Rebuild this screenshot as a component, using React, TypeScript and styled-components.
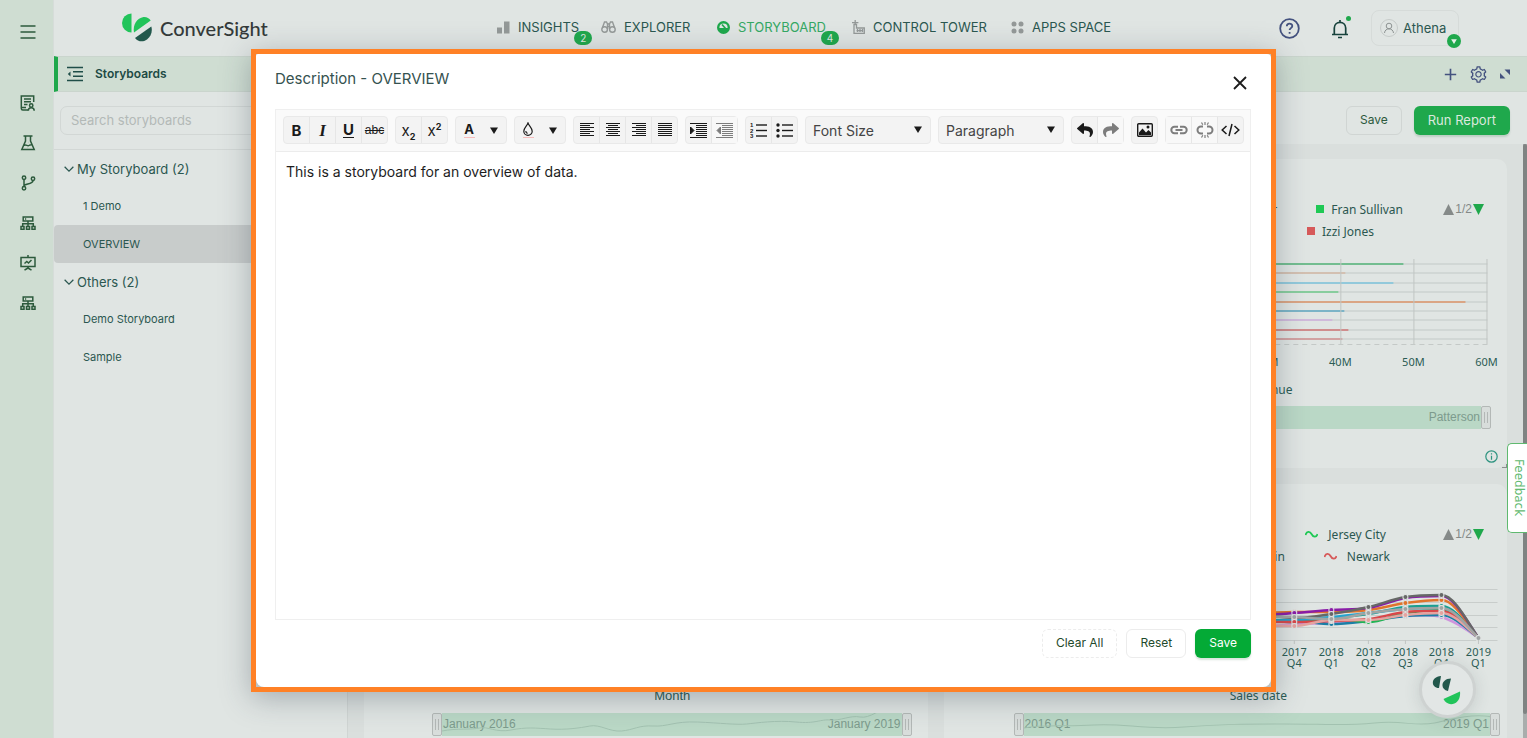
import React from 'react';
import styled, { createGlobalStyle } from 'styled-components';
import { AiOutlineSetting } from 'react-icons/ai';
import { FaReply, FaShare } from 'react-icons/fa';

const c = {
  surface: '#e0e5e3',
  canvas: '#dadfdd',
  rail: '#cfddd2',
  line: '#d2d7d5',
  ink: '#2b5750',
  railInk: '#2c5a3c',
  green: '#1fa84c',
  indigo: '#44527f',
  muted: '#949998',
};

const Global = createGlobalStyle`
  *, *::before, *::after { box-sizing: border-box; }
  html, body { margin: 0; height: 100%; }
  body {
    overflow: hidden;
    font-family: Inter, "Liberation Sans", sans-serif;
    font-size: 13px;
    color: ${c.ink};
    background: ${c.surface};
  }
  button, input, select, textarea { font: inherit; color: inherit; }
  svg { display: block; }
`;

/* ---------- shell ---------- */

const Shell = styled.div`
  display: flex;
  height: 100vh;
`;

const Rail = styled.nav`
  flex: none;
  width: 54px;
  padding: 24px 0 0 2px;
  display: flex;
  flex-direction: column;
  align-items: center;
  gap: 24px;
  background: ${c.rail};
  color: ${c.railInk};
  border-right: 1px solid #d6dcd9;
`;

const IconButton = styled.button`
  display: flex;
  align-items: center;
  justify-content: center;
  padding: 0;
  border: 0;
  background: none;
  cursor: pointer;
`;

const MenuButton = styled(IconButton)`
  height: 16px;
  margin-bottom: 31px;
`;

const Body = styled.div`
  flex: 1;
  min-width: 0;
  display: flex;
  flex-direction: column;
`;

const Header = styled.header`
  flex: none;
  height: 56px;
  display: flex;
  align-items: center;
  padding: 0 68px;
`;

const Brand = styled.a`
  flex: 0 0 375px;
  display: flex;
  align-items: center;
  gap: 8px;
  color: #343a3a;
  text-decoration: none;
  font: 500 20px/30px Lato, sans-serif;
`;

const TopNav = styled.nav`
  display: grid;
  grid-template-columns: 104px 116px 135px 159px auto;
  padding-bottom: 2px;
  white-space: nowrap;
`;

const TopLink = styled.a<{ $active?: boolean }>`
  position: relative;
  justify-self: start;
  display: flex;
  align-items: center;
  gap: 8px;
  height: 20px;
  color: ${(p) => (p.$active ? '#35a864' : c.ink)};
  text-decoration: none;
  svg { color: ${(p) => (p.$active ? c.green : c.muted)}; }
`;

const Count = styled.span`
  position: absolute;
  right: -13px;
  bottom: -8px;
  width: 18px;
  height: 14px;
  border-radius: 7px;
  background: ${c.green};
  color: #dfe9e2;
  font-size: 10px;
  line-height: 14px;
  text-align: center;
`;

const Account = styled.div`
  margin-left: auto;
  display: flex;
  align-items: center;
`;

const BellButton = styled(IconButton)`
  position: relative;
  margin: 0 21px 0 30px;
  color: #17423c;
  &::after {
    content: '';
    position: absolute;
    top: -1px;
    right: -1px;
    width: 5px;
    height: 5px;
    border-radius: 50%;
    background: ${c.green};
  }
`;

const UserButton = styled.button`
  position: relative;
  display: flex;
  align-items: center;
  gap: 5px;
  height: 36px;
  width: 88px;
  padding: 0 0 0 8px;
  border: 1px solid #d6dbd9;
  border-radius: 8px;
  background: none;
`;

const Presence = styled.span`
  position: absolute;
  right: -3px;
  bottom: -3px;
  display: grid;
  place-items: center;
  width: 14px;
  height: 14px;
  border-radius: 50%;
  background: ${c.green};
  color: #e8f1ea;
`;

const Strip = styled.div`
  flex: none;
  display: flex;
  align-items: center;
  gap: 12px;
  height: 36px;
  padding: 0 17px 0 9px;
  border-left: 4px solid ${c.green};
  border-top: 1px solid #cad5cd;
  border-bottom: 1px solid #cad5cd;
  background: #cfddd2;
  color: ${c.indigo};
`;

const StripTitle = styled.h1`
  flex: 1;
  margin: 0;
  color: #1d4a44;
  font-size: 12px;
  font-weight: 600;
  line-height: 16px;
`;

const Workspace = styled.div`
  flex: 1;
  min-height: 0;
  display: grid;
  grid-template-columns: 294px minmax(0, 1fr);
`;

/* ---------- storyboard list ---------- */

const Sidebar = styled.aside`
  border-right: 1px solid #d0d5d3;
`;

const SearchBox = styled.div`
  padding: 14px 8px 14px 6px;
  border-bottom: 1px solid ${c.line};
`;

const Search = styled.input`
  display: block;
  width: 100%;
  height: 29px;
  padding: 0 10px 2px;
  border: 1px solid ${c.line};
  border-radius: 7px;
  background: none;
  &::placeholder { color: #b3b9b7; opacity: 1; }
`;

const GroupTitle = styled.button`
  display: flex;
  align-items: center;
  gap: 3px;
  width: 100%;
  height: 37px;
  padding: 0 0 0 10px;
  border: 0;
  background: none;
`;

const List = styled.ul`
  margin: 0;
  padding: 0;
  list-style: none;
`;

const Item = styled.a<{ $current?: boolean }>`
  display: block;
  height: 38px;
  padding-left: 29px;
  border-radius: 4px;
  background: ${(p) => (p.$current ? '#c8cccb' : 'none')};
  color: ${c.ink};
  font-size: 11px;
  line-height: 38px;
  text-decoration: none;
`;

/* ---------- dashboard ---------- */

const Board = styled.main`
  display: flex;
  flex-direction: column;
  min-height: 0;
`;

const Actions = styled.div`
  flex: none;
  display: flex;
  justify-content: flex-end;
  gap: 12px;
  padding: 14px 17px 9px;
`;

const Button = styled.button<{ $kind?: 'primary' | 'dashed'; $dim?: boolean }>`
  height: 29px;
  padding: 0 13px 2px;
  border: 1px ${(p) => (p.$kind === 'dashed' ? 'dashed' : 'solid')} ${(p) => (p.$dim ? '#d0d5d3' : '#ececec')};
  border-radius: 6px;
  background: none;
  color: ${(p) => (p.$dim ? '#2c5a3c' : '#1f4a2c')};
  font-size: 12px;
  line-height: 16px;
  white-space: nowrap;
  cursor: pointer;
  ${(p) =>
    p.$kind === 'primary' &&
    `
      border-color: transparent;
      background: ${p.$dim ? c.green : '#04aa36'};
      color: ${p.$dim ? '#dbe9df' : '#ffffff'};
      box-shadow: 0 2px 2px rgba(0, 90, 30, 0.16);
    `}
`;

const RunButton = styled(Button)`
  font-size: 13px;
`;

const Scroller = styled.div`
  flex: 1;
  min-height: 0;
  display: flex;
  background: ${c.canvas};
`;

const Cards = styled.div`
  flex: 1;
  min-width: 0;
  display: grid;
  grid-template-columns: repeat(2, minmax(0, 1fr));
  grid-template-rows: 309px 309px;
  gap: 16px;
  padding: 15px 16px;
  overflow: hidden;
`;

const ScrollTrack = styled.div`
  flex: none;
  width: 4px;
  background: #a9adac;
`;

const ScrollThumb = styled.div`
  height: 96%;
  border-radius: 2px;
  background: #7f8382;
`;

const Card = styled.section`
  position: relative;
  padding-top: 39px;
  border-radius: 10px;
  background: ${c.surface};
  font-family: "Noto Sans", sans-serif;
  font-size: 12px;
`;

const LegendRow = styled.div<{ $end: number }>`
  display: flex;
  justify-content: flex-end;
  align-items: center;
  gap: 39px;
  height: 22px;
  padding-right: ${(p) => p.$end}px;
`;

const LegendItem = styled.span<{ $line?: boolean }>`
  display: flex;
  align-items: center;
  gap: ${(p) => (p.$line ? 10 : 6)}px;
`;

const Pager = styled.div`
  position: absolute;
  top: 39px;
  right: 23px;
  display: flex;
  align-items: center;
  gap: 1px;
  height: 22px;
  color: #848988;
  font: 12px/16px "Liberation Sans", sans-serif;
`;

const Plot = styled.svg`
  width: 100%;
  font-family: "Noto Sans", sans-serif;
  font-size: 12px;
  fill: #2b5c54;
`;

const Zoom = styled.div<{ $left: number; $right: number }>`
  position: relative;
  display: flex;
  height: 23px;
  margin: 0 ${(p) => p.$right}px 0 ${(p) => p.$left}px;
`;

const Grip = styled.span`
  flex: none;
  display: flex;
  justify-content: center;
  align-items: center;
  gap: 2px;
  width: 10px;
  border: 1px solid #b3b8b6;
  border-radius: 2px;
  background: #d8dddb;
  &::before, &::after {
    content: '';
    width: 1px;
    height: 11px;
    background: #b3b8b6;
  }
`;

const Range = styled.div`
  position: relative;
  flex: 1;
  display: flex;
  justify-content: space-between;
  align-items: center;
  padding: 0 1px 2px 1px;
  background: #bad8c6;
  color: #7d9b8d;
  font: 12px/16px "Liberation Sans", sans-serif;
`;

const Spark = styled.svg`
  position: absolute;
  inset: 0;
  width: 100%;
  height: 100%;
`;

const InfoButton = styled(IconButton)`
  margin: 21px 9px 0 auto;
  color: #2f9480;
`;

const Resizer = styled.span`
  position: absolute;
  right: 0;
  bottom: 0;
  width: 5px;
  height: 4px;
  border: solid #8a8e8d;
  border-width: 0 1px 1px 0;
`;

/* ---------- floating pieces ---------- */

const Assistant = styled.button`
  position: fixed;
  right: 51px;
  bottom: 20px;
  z-index: 2;
  display: grid;
  place-items: center;
  width: 57px;
  height: 57px;
  padding: 0;
  border: 3px solid #ced2d1;
  border-radius: 50%;
  background: #e2e6e5;
  box-shadow: 0 2px 16px rgba(60, 80, 80, 0.16);
`;

const Feedback = styled.button`
  position: fixed;
  right: 0;
  top: 60%;
  z-index: 3;
  width: 20px;
  height: 90px;
  padding: 0 0 0 3px;
  border: 1px solid #5fb96f;
  border-right: 0;
  border-radius: 5px 0 0 5px;
  background: #fff;
  color: #62ba70;
  font: 12px/16px "DejaVu Sans", sans-serif;
  writing-mode: vertical-rl;
`;

/* ---------- dialog ---------- */

const Backdrop = styled.div`
  position: fixed;
  inset: 0;
  z-index: 1;
  display: flex;
  justify-content: center;
  align-items: flex-start;
  padding-top: 49px;
`;

const Frame = styled.div`
  width: 1025px;
  max-width: 94vw;
  border: 5px solid #ff8126;
  background: #bcc3c4;
  box-shadow: 0 6px 28px rgba(50, 62, 75, 0.34);
`;

const Dialog = styled.div`
  padding: 0 20px 29px 19px;
  border-radius: 2px 4px 8px 8px;
  background: #fff;
`;

const DialogHead = styled.div`
  display: flex;
  justify-content: space-between;
  height: 55px;
  padding: 16px 2px 0 0;
`;

const DialogTitle = styled.h2`
  margin: 0;
  color: #35524f;
  font-size: 15px;
  font-weight: 400;
  line-height: 18px;
`;

const Close = styled(IconButton)`
  width: 18px;
  height: 25px;
  color: #1c1c1c;
`;

const Editor = styled.div`
  border: 1px solid #efefef;
`;

const Toolbar = styled.div`
  display: flex;
  flex-wrap: wrap;
  gap: 7px;
  padding: 6px 0 7px 7px;
  border-bottom: 1px solid #ececec;
  background: #fafafa;
`;

const Tools = styled.div`
  display: flex;
  height: 28px;
  border: 1px solid #e9e9e9;
  border-radius: 4px;
  background: #f3f3f3;
`;

const Tool = styled.button<{ $off?: boolean; $wide?: boolean }>`
  display: flex;
  align-items: center;
  justify-content: ${(p) => (p.$wide ? 'space-between' : 'center')};
  width: ${(p) => (p.$wide ? 50 : 25)}px;
  padding: ${(p) => (p.$wide ? '0 8px 0 7px' : '0')};
  box-sizing: ${(p) => (p.$wide ? 'border-box' : 'content-box')};
  border: 0;
  background: ${(p) => (p.$off ? '#f8f8f8' : 'none')};
  color: ${(p) => (p.$off ? '#7d7d7d' : '#1a1a1a')};
  & + & { border-left: 1px solid #e6e6e6; }
`;

const Picker = styled.label`
  position: relative;
  width: 126px;
  height: 28px;
  color: #1a1a1a;
  svg {
    position: absolute;
    top: 10px;
    right: 9px;
    pointer-events: none;
  }
`;

const Select = styled.select`
  appearance: none;
  width: 100%;
  height: 100%;
  padding: 0 24px 0 7px;
  border: 1px solid #e9e9e9;
  border-radius: 4px;
  background: #f3f3f3;
  color: #444;
  font-size: 14px;
`;

const Content = styled.textarea`
  display: block;
  width: 100%;
  height: 467px;
  padding: 10px;
  border: 0;
  outline: 0;
  resize: none;
  background: #fff;
  color: #1d1d1d;
  font-size: 14px;
  line-height: 20px;
`;

const DialogActions = styled.div`
  display: flex;
  justify-content: flex-end;
  gap: 9px;
  padding-top: 9px;
`;

/* ---------- icons ---------- */

type IconProps = { d?: string; size?: number; w?: number; children?: React.ReactNode };

const Line = ({ d, size = 16, w = 1.5, children }: IconProps) => (
  <svg width={size} height={size} viewBox="0 0 16 16" fill="none" stroke="currentColor" strokeWidth={w} aria-hidden="true">
    {d && <path d={d} />}
    {children}
  </svg>
);

const Down = ({ size = 8 }: { size?: number }) => (
  <svg width={size} height={size - 1} viewBox="0 0 8 7" fill="currentColor" aria-hidden="true">
    <path d="M0 .5h8L4 7z" />
  </svg>
);

const ReportIcon = () => (
  <Line d="M8 15H2.8A1.5 1.5 0 0 1 1.3 13.500V1h12.400v6M4 4h7M4 6.800h7M4 9.600h3.500M1.300 12.500H6">
    <circle cx="11.200" cy="10.500" r="1.700" />
    <path d="M8.300 15.800c0-4 5.900-4 5.900 0" />
  </Line>
);
const FlaskIcon = () => (
  <Line d="M3.500 1h9M5.500 1v5L1.800 14.500h12.400L10.500 6V1M4 10.500c2-1.500 3.500 1 5 0s2-1 3.300-.5">
    <path d="M8.700 7.500h.1M7 12.500h.1" />
  </Line>
);
const BranchIcon = () => (
  <Line d="M4 4.500v7.300M4 11c0-3 9-1 9-5.500">
    <circle cx="4" cy="2.700" r="1.700" />
    <circle cx="4" cy="13.300" r="1.700" />
    <circle cx="13" cy="3.800" r="1.700" />
  </Line>
);
const TreeIcon = () => (
  <Line d="M3.200 2h9.600v4H3.200zM8 6v5M2.700 11V8.700h10.600V11M5 4h1.200">
    <path d="M1 11.500h3V14.300H1zM6.500 11.500h3V14.300h-3zM12 11.500h3V14.300h-3z" />
  </Line>
);
const SlidesIcon = () => (
  <Line d="M8 0v2M.3 2.500h15.400M1 2.500v9h14v-9M4.500 8.500l2.300-2 1.700 1.500 3-3M8 11.500v2M4.500 15.200L8 13l3.500 2.200" />
);

const railIcons = [
  ['Reports', <ReportIcon />],
  ['Experiments', <FlaskIcon />],
  ['Branches', <BranchIcon />],
  ['Hierarchy', <TreeIcon />],
  ['Presentations', <SlidesIcon />],
  ['Datasets', <TreeIcon />],
] as const;

const LogoMark = () => (
  <svg width="30" height="30" viewBox="0 0 30 30" aria-hidden="true">
    <path d="M9.500 .5v19a9.500 9.500 0 0 1 0-19z" fill="#21c45a" />
    <path d="M12 19.500C10.500 12 15 5 21.500 4c3-.3 5.500 1 7.200 3.500z" fill="#21c45a" />
    <path d="M29.300 13.500c1.500 5-.3 10-4.300 13-4 2.800-9 2.500-12-1.500z" fill="#22584c" />
  </svg>
);

const BarsIcon = () => (
  <svg width="13" height="14" viewBox="0 0 13 14" fill="currentColor" aria-hidden="true">
    <path d="M0 7.500h5v6H0zM7 1.500h5.500v12H7z" />
  </svg>
);
const BinocularsIcon = () => (
  <svg width="15" height="14" viewBox="0 0 15 14" fill="none" stroke="currentColor" strokeWidth="1.400" aria-hidden="true">
    <circle cx="3.600" cy="9.500" r="2.800" />
    <circle cx="11.400" cy="9.500" r="2.800" />
    <path d="M1.500 7.500L3.500 2h2l1 2h2l1-2h2l2 5.500M6 6.500h3M6.500 3v6M8.500 3v6" />
  </svg>
);
const BoardIcon = () => (
  <svg width="13" height="13" viewBox="0 0 13 13" aria-hidden="true">
    <circle cx="6.500" cy="6.500" r="5.300" fill="none" stroke="currentColor" strokeWidth="2.400" />
    <path d="M1.500 7h10v2.500l-3 2.500h-4l-3-2.500z" fill="currentColor" />
    <path d="M5 3.500L8.500 7.500" stroke="currentColor" strokeWidth="1.600" />
  </svg>
);
const TowerIcon = () => (
  <svg width="13" height="14" viewBox="0 0 13 14" fill="none" stroke="currentColor" strokeWidth="1.300" aria-hidden="true">
    <path d="M3.200 0v4M0 2.700h6.400M2 4v9.300h10.300V8H4.500V4M1.500 4.500h3.500M4.500 10.700h6M5.500 9v3M8 9v3M10.500 9v3" />
  </svg>
);
const AppsIcon = () => (
  <svg width="13" height="13" viewBox="0 0 13 13" fill="currentColor" aria-hidden="true">
    <circle cx="3" cy="3" r="2.500" />
    <circle cx="10" cy="3" r="2.500" />
    <circle cx="3" cy="10" r="2.500" />
    <circle cx="10" cy="10" r="2.500" />
  </svg>
);

/* ---------- charts ---------- */

const bars: [string, number][] = [
  ['#53b578', 459], ['#d3b9a4', 401], ['#7cc5dc', 449], ['#6fca8b', 394], ['#dc9468', 521],
  ['#5fa8c2', 400], ['#cfb1dc', 388], ['#cf7474', 404], ['#d29090', 398],
];

const RevenueChart = () => (
  <Plot viewBox="0 0 563 164" role="img" aria-label="Revenue by person">
    {bars.map(([color, end], i) => {
      const y = 22 + Math.round(i * 9.4);
      return (
        <g key={color} strokeWidth="1.500">
          <path d={`M70 ${y}H543`} stroke="#cdd2d0" />
          <path d={`M70 ${y}H${end}`} stroke={color} />
        </g>
      );
    })}
    {[323, 396, 469, 542].map((x, i) => (
      <g key={x}>
        <path d={`M${x}.5 17V102`} stroke="#c0c5c3" />
        <text x={x} y="124" textAnchor="middle" fontSize="11">{`${30 + i * 10}M`}</text>
      </g>
    ))}
    <path d="M70 102.500H543" stroke="#c4c9c7" strokeDasharray="5 4" />
    <text x="324" y="152" textAnchor="middle">Revenue</text>
  </Plot>
);

const quarters = [277, 313, 350, 387, 424, 461, 497, 534];
const trend: [string, number[]][] = [
  ['#cf94dd', [57, 60, 57, 56, 53, 49, 50, 71]],
  ['#1b7fa6', [52, 54, 54, 57, 54, 49, 48, 71]],
  ['#22b455', [48, 52, 55, 51, 55, 46, 43, 71]],
  ['#1a9f8f', [50, 53, 53, 51, 47, 40, 39, 71]],
  ['#22a4cf', [54, 54, 53, 50, 46, 42, 41, 71]],
  ['#e0742c', [43, 46, 45, 45, 43, 36, 33, 71]],
  ['#8a1ca8', [46, 48, 46, 43, 41, 31, 29, 71]],
  ['#666867', [40, 46, 51, 47, 40, 30, 28, 71]],
  ['#d8484a', [50, 55, 55, 54, 52, 45, 44, 71]],
  ['#e5a3a0', [55, 58, 59, 53, 53, 48, 46, 71]],
  ['#a0a4a3', [46, 49, 50, 52, 46, 42, 41, 71]],
];

function smooth(xs: number[], ys: number[]) {
  const slope = (i: number) => (ys[i + 1] - ys[i]) / (xs[i + 1] - xs[i]);
  const tangent = (i: number) => {
    if (i === 0) return slope(0);
    if (i === xs.length - 1) return slope(i - 1) * 1.3;
    const a = slope(i - 1);
    const b = slope(i);
    return a * b <= 0 ? 0 : (a + b) / 2;
  };
  let d = `M${xs[0]} ${ys[0]}`;
  for (let i = 0; i < xs.length - 1; i++) {
    const h = (xs[i + 1] - xs[i]) / 3;
    d += `C${xs[i] + h} ${ys[i] + h * tangent(i)} ${xs[i + 1] - h} ${ys[i + 1] - h * tangent(i + 1)} ${xs[i + 1]} ${ys[i + 1]}`;
  }
  return d;
}

const quarterLabels = ['2017,Q2', '2017,Q3', '2017,Q4', '2018,Q1', '2018,Q2', '2018,Q3', '2018,Q4', '2019,Q1'];

const SalesChart = () => (
  <Plot viewBox="0 0 563 146" role="img" aria-label="Sales by date">
    {[22, 35, 48, 60, 73].map((y) => (
      <path key={y} d={`M70 ${y}.5H553`} stroke="#c8cdcb" />
    ))}
    {trend.map(([color, ys]) => (
      <g key={color}>
        <path d={smooth(quarters, ys)} fill="none" stroke={color} strokeWidth="2.500" />
        {quarters.map((x, i) => (
          <circle key={x} cx={x} cy={ys[i]} r="2.500" fill={color} stroke="#dfe3e2" strokeWidth="1" />
        ))}
      </g>
    ))}
    {quarters.map((x, i) => {
      const [year, quarter] = quarterLabels[i].split(',');
      return (
        <g key={x} textAnchor="middle" fontSize="11">
          <path d={`M${x} 73v4`} stroke="#c0c5c3" />
          <text x={x} y="89">{year}</text>
          <text x={x} y="100">{quarter}</text>
        </g>
      );
    })}
    <text x="314" y="133" textAnchor="middle">Sales date</text>
  </Plot>
);

const MonthChart = () => (
  <Plot viewBox="0 0 563 190" role="img" aria-label="Sales by month">
    {[66, 79, 92, 104, 117].map((y) => (
      <path key={y} d={`M70 ${y}.5H548`} stroke="#c8cdcb" />
    ))}
    <text x="308" y="177" textAnchor="middle" fontFamily="Liberation Sans" fontSize="13">Month</text>
  </Plot>
);

const monthSpark = 'M0 18C15 15 30 17 38 15S55 20 70 17s25-2 40-1 30-1 40-3 20 6 32 5 18-6 32-5 22-5 45-4 40 3 50 2 30-4 50-2 25-3 35-2 20-5 30-3 20-9 32-9 14 6 24 4 30-2 34 0 6 6 6 7';
const quarterSpark = 'M0 15c20-4 40-1 70-3s50 5 90 2 60-3 100-3 60 2 90-1 40 4 60 0 30-8 50-7 16 12 24 16';

const RangeBar = ({ left, right, from, to, spark }: { left: number; right: number; from?: string; to: string; spark?: string }) => (
  <Zoom $left={left} $right={right}>
    <Grip />
    <Range>
      {spark && (
        <Spark viewBox="0 0 466 23" preserveAspectRatio="none" aria-hidden="true">
          <path d={spark} fill="none" stroke="#a2c2b0" />
        </Spark>
      )}
      <span>{from}</span>
      <span>{to}</span>
    </Range>
    <Grip />
  </Zoom>
);

const LegendPager = () => (
  <Pager>
    <svg width="11" height="11" viewBox="0 0 11 11" fill="#858a89" aria-hidden="true"><path d="M0 11L5.500 0 11 11z" /></svg>
    <span>1/2</span>
    <svg width="11" height="11" viewBox="0 0 11 11" fill={c.green} aria-hidden="true"><path d="M0 0L5.500 11 11 0z" /></svg>
  </Pager>
);

const Square = ({ color }: { color: string }) => (
  <svg width="9" height="8" aria-hidden="true"><rect width="8" height="8" fill={color} /></svg>
);
const Wave = ({ color }: { color: string }) => (
  <svg width="13" height="8" viewBox="0 0 13 8" fill="none" stroke={color} strokeWidth="1.800" aria-hidden="true">
    <path d="M.5 5C1.500 1 5 1 6.500 4s5 4 6 0" />
  </svg>
);

/* ---------- toolbar icons ---------- */

const AlignIcon = ({ kind }: { kind: 'left' | 'center' | 'right' | 'justify' }) => (
  <svg width="14" height="14" stroke="currentColor" strokeWidth="1" aria-hidden="true">
    {[0, 1, 2, 3, 4, 5, 6].map((i) => {
      const w = kind === 'justify' || i % 2 === 0 ? 14 : 10;
      const x = kind === 'right' ? 14 - w : kind === 'center' ? (14 - w) / 2 : 0;
      return <path key={i} d={`M${x} ${i * 2 + 0.5}h${w}`} />;
    })}
  </svg>
);

const IndentIcon = ({ out }: { out?: boolean }) => (
  <svg width="17" height="15" viewBox="0 0 17 15" stroke="currentColor" aria-hidden="true">
    <path d="M0 .5h17M6 2.500h11M6 4.500h11M6 6.500h11M6 8.500h11M6 10.500h11M6 12.500h11M0 14.500h17" />
    <path d={out ? 'M4.500 4v7L1 7.500z' : 'M.5 4v7L4 7.500z'} fill="currentColor" />
  </svg>
);

const ListIcon = ({ ordered }: { ordered?: boolean }) => (
  <svg width="17" height="17" viewBox="0 0 17 17" fill="currentColor" fontFamily="Liberation Sans" fontSize="6" fontWeight="700" aria-hidden="true">
    {[3, 8.5, 14].map((y, i) => (
      <g key={y}>
        {ordered ? <text x="0" y={y + 2}>{i + 1}</text> : <circle cx="2" cy={y} r="1.700" />}
        <path d={`M6 ${y - 0.7}h11v1.400H6z`} />
      </g>
    ))}
  </svg>
);

const Glyph = styled.span<{ $italic?: boolean; $u?: boolean }>`
  font-family: ${(p) => (p.$italic ? '"Liberation Serif", serif' : 'Inter, sans-serif')};
  font-size: ${(p) => (p.$italic ? 17 : 15)}px;
  font-style: ${(p) => (p.$italic ? 'italic' : 'normal')};
  font-weight: 700;
  line-height: ${(p) => (p.$u ? 15 : 17)}px;
  border-bottom: ${(p) => (p.$u ? '1px solid currentColor' : '0')};
`;

const Strike = styled.s`
  font: 12px/16px "Liberation Sans", sans-serif;
`;

const Script = styled.span`
  font-size: 15px;
  line-height: 17px;
  sub, sup { font-size: 9px; font-weight: 700; line-height: 0; }
`;

const Swatch = styled.span`
  display: grid;
  justify-items: center;
  gap: 1px;
  width: 12px;
  font-size: 13px;
  font-weight: 700;
  line-height: 14px;
  &::after {
    content: '';
    width: 11px;
    height: 1px;
    background: #f7bcbc;
  }
`;

const LinkIcon = ({ broken }: { broken?: boolean }) => (
  <svg width="18" height="16" viewBox="0 0 18 16" fill="none" stroke="currentColor" strokeWidth="2" aria-hidden="true">
    <path d={broken ? 'M7 4.500H5a3.500 3.500 0 0 0 0 7h2M11 4.500h2a3.500 3.500 0 0 1 0 7h-2' : 'M8 4.800H4.500a3.200 3.200 0 0 0 0 6.400H8M10 4.800h3.500a3.200 3.200 0 0 1 0 6.400H10M5.500 8h7'} />
    {broken && <path strokeWidth="1.200" d="M9 0v3M5.500 .5l1.300 2.300M12.500 .5l-1.300 2.300M9 16v-3M5.500 15.500l1.300-2.300M12.500 15.500l-1.300-2.300" />}
  </svg>
);

const ImageIcon = () => (
  <svg width="16" height="14" viewBox="0 0 16 14" aria-hidden="true">
    <rect x=".7" y=".7" width="14.600" height="12.600" rx="1" fill="none" stroke="currentColor" strokeWidth="1.400" />
    <path d="M2 12V9.500l3.500-4 3.500 4L11.500 7 14 9.500V12z" fill="currentColor" />
    <circle cx="11" cy="4" r="1.500" fill="currentColor" />
  </svg>
);

function EditorToolbar() {
  return (
    <Toolbar role="toolbar" aria-label="Formatting">
      <Tools>
        <Tool aria-label="Bold"><Glyph>B</Glyph></Tool>
        <Tool aria-label="Italic"><Glyph $italic>I</Glyph></Tool>
        <Tool aria-label="Underline"><Glyph $u>U</Glyph></Tool>
        <Tool aria-label="Strikethrough"><Strike>abc</Strike></Tool>
      </Tools>
      <Tools>
        <Tool aria-label="Subscript"><Script>x<sub>2</sub></Script></Tool>
        <Tool aria-label="Superscript"><Script>x<sup>2</sup></Script></Tool>
      </Tools>
      <Tools><Tool $wide aria-label="Text color"><Swatch>A</Swatch><Down /></Tool></Tools>
      <Tools>
        <Tool $wide aria-label="Highlight color">
          <Swatch>
            <svg width="12" height="14" viewBox="0 0 12 14" fill="none" stroke="currentColor" strokeWidth="1.200" aria-hidden="true">
              <path d="M6 1C5 4 1.800 6 1.800 9.200a4.200 4.200 0 0 0 8.400 0C10.200 6 7 4 6 1zM3.800 9c0 1.500.8 2.200 1.800 2.400" />
            </svg>
          </Swatch>
          <Down />
        </Tool>
      </Tools>
      <Tools>
        <Tool aria-label="Align left"><AlignIcon kind="left" /></Tool>
        <Tool aria-label="Align center"><AlignIcon kind="center" /></Tool>
        <Tool aria-label="Align right"><AlignIcon kind="right" /></Tool>
        <Tool aria-label="Justify"><AlignIcon kind="justify" /></Tool>
      </Tools>
      <Tools>
        <Tool aria-label="Indent"><IndentIcon /></Tool>
        <Tool $off aria-label="Outdent"><IndentIcon out /></Tool>
      </Tools>
      <Tools>
        <Tool aria-label="Numbered list"><ListIcon ordered /></Tool>
        <Tool aria-label="Bulleted list"><ListIcon /></Tool>
      </Tools>
      <Picker>
        <Select aria-label="Font size"><option>Font Size</option></Select>
        <Down />
      </Picker>
      <Picker>
        <Select aria-label="Block format"><option>Paragraph</option></Select>
        <Down />
      </Picker>
      <Tools>
        <Tool aria-label="Undo"><FaReply size={16} /></Tool>
        <Tool $off aria-label="Redo"><FaShare size={16} /></Tool>
      </Tools>
      <Tools><Tool aria-label="Insert image"><ImageIcon /></Tool></Tools>
      <Tools>
        <Tool $off aria-label="Insert link"><LinkIcon /></Tool>
        <Tool $off aria-label="Remove link"><LinkIcon broken /></Tool>
        <Tool aria-label="Source code">
          <svg width="19" height="14" viewBox="0 0 19 14" fill="none" stroke="currentColor" strokeWidth="1.500" aria-hidden="true">
            <path d="M5.500 3L1.200 7l4.300 4M13.500 3l4.300 4-4.300 4M11 1L8 13" />
          </svg>
        </Tool>
      </Tools>
    </Toolbar>
  );
}

function DescriptionDialog() {
  return (
    <Backdrop>
      <Frame>
        <Dialog role="dialog" aria-modal="true" aria-labelledby="dialog-title">
          <DialogHead>
            <DialogTitle id="dialog-title">Description - OVERVIEW</DialogTitle>
            <Close aria-label="Close"><Line w={1.8} d="M2 2l12 12M14 2L2 14" /></Close>
          </DialogHead>
          <Editor>
            <EditorToolbar />
            <Content aria-label="Description" defaultValue="This is a storyboard for an overview of data." />
          </Editor>
          <DialogActions>
            <Button $kind="dashed">Clear All</Button>
            <Button>Reset</Button>
            <Button $kind="primary">Save</Button>
          </DialogActions>
        </Dialog>
      </Frame>
    </Backdrop>
  );
}

const Chevron = () => <Line size={10} w={2} d="M1 4.500l7 7 7-7" />;

export default function App() {
  return (
    <>
      <Global />
      <Shell>
        <Rail aria-label="Tools">
          <MenuButton aria-label="Menu"><Line d="M.5 2h15M.5 8h15M.5 14h15" /></MenuButton>
          {railIcons.map(([label, icon]) => (
            <IconButton key={label} aria-label={label}>{icon}</IconButton>
          ))}
        </Rail>
        <Body>
          <Header>
            <Brand href="#"><LogoMark />ConverSight</Brand>
            <TopNav aria-label="Main">
              <TopLink href="#"><BarsIcon />INSIGHTS<Count>2</Count></TopLink>
              <TopLink href="#"><BinocularsIcon />EXPLORER</TopLink>
              <TopLink href="#" $active><BoardIcon />STORYBOARD<Count>4</Count></TopLink>
              <TopLink href="#"><TowerIcon />CONTROL TOWER</TopLink>
              <TopLink href="#"><AppsIcon />APPS SPACE</TopLink>
            </TopNav>
            <Account>
              <IconButton aria-label="Help">
                <svg width="21" height="21" viewBox="0 0 21 21" fill="none" stroke={c.indigo} strokeWidth="1.800" aria-hidden="true">
                  <circle cx="10.500" cy="10.500" r="9.300" />
                  <path d="M7.800 8.300c0-3.600 5.500-3.500 5.500-.2 0 2-2.700 2.100-2.700 4M10.600 14v1.800" />
                </svg>
              </IconButton>
              <BellButton aria-label="Notifications">
                <svg width="20" height="22" viewBox="0 0 20 22" fill="none" stroke="currentColor" strokeWidth="1.700" aria-hidden="true">
                  <path d="M2 17.500h16M4.300 17V11C4.300 3.500 15.700 3.500 15.700 11v6M10 3v2.500M8 20.500h4" />
                </svg>
              </BellButton>
              <UserButton>
                <svg width="18" height="18" viewBox="0 0 18 18" fill="none" stroke="#8d9392" aria-hidden="true">
                  <circle cx="9" cy="9" r="8.500" stroke="#c6cbc9" />
                  <circle cx="9" cy="7" r="2.800" />
                  <path d="M4.500 14c.3-5.500 8.700-5.500 9 0" />
                </svg>
                Athena
                <Presence><Down size={6} /></Presence>
              </UserButton>
            </Account>
          </Header>
          <Strip>
            <IconButton aria-label="Collapse list">
              <svg width="16" height="16" viewBox="0 0 16 16" fill="none" stroke="#1f4e48" strokeWidth="1.500" aria-hidden="true">
                <path d="M0 1.500h16M6 5.800h10M6 10.200h10M0 14.500h16" />
                <path d="M3.500 5.500v5L.8 8z" fill="#1f4e48" stroke="none" />
              </svg>
            </IconButton>
            <StripTitle>Storyboards</StripTitle>
            <IconButton aria-label="Add"><Line size={13} w={2} d="M8 1v14M1 8h14" /></IconButton>
            <IconButton aria-label="Settings"><AiOutlineSetting size={19} color={c.indigo} /></IconButton>
            <IconButton aria-label="Expand">
              <svg width="10" height="10" viewBox="0 0 10 10" fill={c.indigo} aria-hidden="true">
                <path d="M4.500 .5H10V6zM0 4v5.500h5.500z" />
              </svg>
            </IconButton>
          </Strip>
          <Workspace>
            <Sidebar>
              <SearchBox><Search type="search" aria-label="Search storyboards" placeholder="Search storyboards" /></SearchBox>
              <GroupTitle><Chevron />My Storyboard (2)</GroupTitle>
              <List>
                <li><Item href="#">1 Demo</Item></li>
                <li><Item href="#" $current>OVERVIEW</Item></li>
              </List>
              <GroupTitle><Chevron />Others (2)</GroupTitle>
              <List>
                <li><Item href="#">Demo Storyboard</Item></li>
                <li><Item href="#">Sample</Item></li>
              </List>
            </Sidebar>
            <Board>
              <Actions>
                <Button $dim>Save</Button>
                <RunButton $dim $kind="primary">Run Report</RunButton>
              </Actions>
              <Scroller>
                <Cards>
                  <Card />
                  <Card>
                    <LegendPager />
                    <LegendRow $end={104}>
                      <LegendItem><Square color="#3f9fc0" />Taylor</LegendItem>
                      <LegendItem><Square color="#1fc955" />Fran Sullivan</LegendItem>
                    </LegendRow>
                    <LegendRow $end={133}>
                      <LegendItem><Square color="#d65a5a" />Izzi Jones</LegendItem>
                    </LegendRow>
                    <RevenueChart />
                    <RangeBar left={70} right={16} to="Patterson" />
                    <InfoButton aria-label="About this chart">
                      <Line size={13} w={1.5}><circle cx="8" cy="8" r="7" /><path d="M8 7v5M8 4v1.500" /></Line>
                    </InfoButton>
                    <Resizer />
                  </Card>
                  <Card>
                    <MonthChart />
                    <RangeBar left={68} right={16} from="January 2016" to="January 2019" spark={monthSpark} />
                  </Card>
                  <Card>
                    <LegendPager />
                    <LegendRow $end={121}>
                      <LegendItem $line><Wave color="#1fc955" />Jersey City</LegendItem>
                    </LegendRow>
                    <LegendRow $end={117}>
                      <LegendItem $line><Wave color="#8a1ca8" />Austin</LegendItem>
                      <LegendItem $line><Wave color="#d65a5a" />Newark</LegendItem>
                    </LegendRow>
                    <SalesChart />
                    <RangeBar left={70} right={7} from="2016 Q1" to="2019 Q1" spark={quarterSpark} />
                  </Card>
                </Cards>
                <ScrollTrack><ScrollThumb /></ScrollTrack>
              </Scroller>
            </Board>
          </Workspace>
        </Body>
      </Shell>
      <DescriptionDialog />
      <Assistant aria-label="Open assistant">
        <svg width="32" height="32" viewBox="0 0 32 32" aria-hidden="true">
          <path d="M9 2L7 14C-2 13.500-1 2.500 9 2zM19 4.500l-3 12.500C7.500 15.500 9 4.500 19 4.500z" fill="#22584c" />
          <path d="M11.500 25L28 17.500C29.500 31 15.500 34 11.500 25z" fill="#21c45a" />
        </svg>
      </Assistant>
      <Feedback>Feedback</Feedback>
    </>
  );
}
